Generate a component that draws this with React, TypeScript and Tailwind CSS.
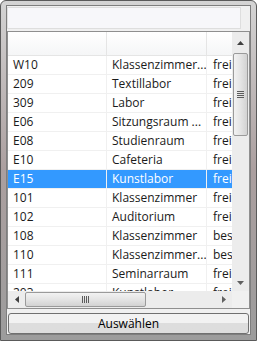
import React from 'react';

type Room = { nr: string; name: string; status: string };

const ROOMS: Room[] = [
  { nr: 'W10', name: 'Klassenzimmer...', status: 'frei' },
  { nr: '209', name: 'Textillabor', status: 'frei' },
  { nr: '309', name: 'Labor', status: 'frei' },
  { nr: 'E06', name: 'Sitzungsraum ...', status: 'frei' },
  { nr: 'E08', name: 'Studienraum', status: 'frei' },
  { nr: 'E10', name: 'Cafeteria', status: 'frei' },
  { nr: 'E15', name: 'Kunstlabor', status: 'frei' },
  { nr: '101', name: 'Klassenzimmer', status: 'frei' },
  { nr: '102', name: 'Auditorium', status: 'frei' },
  { nr: '108', name: 'Klassenzimmer', status: 'bes' },
  { nr: '110', name: 'Klassenzimmer...', status: 'bes' },
  { nr: '111', name: 'Seminarraum', status: 'frei' },
  { nr: '203', name: 'Kunstlabor', status: 'frei' },
];

const SELECTED = 'E15';

function Row({ room }: { room: Room }) {
  const sel = room.nr === SELECTED;
  return (
    <div
      className={`flex h-[19px] shrink-0 border-b border-[#f0f0f0] text-[12px] leading-[18px] ${
        sel ? 'bg-[#3399ff] text-white' : 'bg-white text-[#1a1a1a]'
      }`}
    >
      <div className="w-[99px] shrink-0 truncate border-r border-[#f0f0f0] pl-[5px]">{room.nr}</div>
      <div className="w-[100px] shrink-0 overflow-hidden whitespace-nowrap border-r border-[#f0f0f0] pl-[5px]">
        {room.name}
      </div>
      <div className="w-[40px] shrink-0 whitespace-nowrap pl-[6px]">{room.status}</div>
    </div>
  );
}

export default function App() {
  return (
    <div
      className="h-[341px] w-[257px] rounded-t-[6px] border border-[#5a5a5a] bg-gradient-to-b from-[#d4d4d4] via-[#ab9f9f] to-[#9c9c9c] pb-[5px] pl-[5px] pr-[5px] pt-[4px]"
      style={{ fontFamily: '"Open Sans", "Liberation Sans", sans-serif' }}
    >
      <div className="flex h-full flex-col border border-[#7e7e7e] bg-[#f0f0f0]">
        {/* Filter box */}
        <div className="ml-0 mr-[9px] mt-[1px] h-[22px] border border-[#dedede] bg-[#f7f7fa]" />

        {/* Grid */}
        <div className="mt-[2px] flex h-[278px] flex-col border border-[#8f8f8f] bg-white">
          <div className="flex min-h-0 flex-1">
            <div className="flex min-w-0 flex-1 flex-col overflow-hidden">
              {/* Header */}
              <div className="flex h-[24px] shrink-0 border-b border-[#e5e5e5] bg-gradient-to-b from-white to-[#f5f6f7]">
                <div className="w-[99px] shrink-0 border-r border-[#e5e5e5]" />
                <div className="w-[100px] shrink-0 border-r border-[#e5e5e5]" />
                <div className="flex-1" />
              </div>
              {ROOMS.map((r) => (
                <Row key={r.nr} room={r} />
              ))}
            </div>

            {/* Vertical scrollbar */}
            <div className="flex w-[17px] shrink-0 flex-col items-center bg-[#ececec]">
              <div className="flex h-[21px] w-full items-center justify-center pt-[1px]">
                <svg width="7" height="4" viewBox="0 0 7 4">
                  <path d="M0 4 L3.5 0 L7 4 Z" fill="#404040" />
                </svg>
              </div>
              <div className="flex h-[83px] w-[15px] items-center justify-center rounded-[2px] border border-[#9a9a9a] bg-gradient-to-r from-[#f2f2f2] via-[#e4e4e4] to-[#d2d2d2]">
                <div className="flex flex-col gap-[1px]">
                  <div className="h-px w-[7px] bg-[#5c5c5c]" />
                  <div className="h-px w-[7px] bg-[#5c5c5c]" />
                  <div className="h-px w-[7px] bg-[#5c5c5c]" />
                  <div className="h-px w-[7px] bg-[#5c5c5c]" />
                </div>
              </div>
              <div className="flex-1" />
              <div className="flex h-[17px] w-full items-center justify-center">
                <svg width="7" height="4" viewBox="0 0 7 4">
                  <path d="M0 0 L3.5 4 L7 0 Z" fill="#606060" />
                </svg>
              </div>
            </div>
          </div>

          {/* Horizontal scrollbar */}
          <div className="flex h-[17px] shrink-0">
            <div className="flex flex-1 items-center bg-[#ececec]">
              <div className="flex w-[17px] items-center justify-center">
                <svg width="4" height="7" viewBox="0 0 4 7">
                  <path d="M4 0 L0 3.5 L4 7 Z" fill="#404040" />
                </svg>
              </div>
              <div className="flex h-[15px] w-[121px] items-center justify-center rounded-[2px] border border-[#9a9a9a] bg-gradient-to-b from-[#f2f2f2] via-[#e4e4e4] to-[#d2d2d2]">
                <div className="flex gap-[1px]">
                  <div className="h-[7px] w-px bg-[#5c5c5c]" />
                  <div className="h-[7px] w-px bg-[#5c5c5c]" />
                  <div className="h-[7px] w-px bg-[#5c5c5c]" />
                  <div className="h-[7px] w-px bg-[#5c5c5c]" />
                </div>
              </div>
              <div className="flex-1" />
              <div className="flex w-[17px] items-center justify-center">
                <svg width="4" height="7" viewBox="0 0 4 7">
                  <path d="M0 0 L4 3.5 L0 7 Z" fill="#606060" />
                </svg>
              </div>
            </div>
            <div className="w-[17px] bg-[#f0f0f0]" />
          </div>
        </div>

        {/* Button */}
        <div className="mx-[1px] mt-[4px] flex h-[21px] items-center justify-center rounded-[3px] border border-[#707070] bg-gradient-to-b from-[#f2f2f2] from-50% to-[#dddddd] to-50% text-[12px] text-black">
          Auswählen
        </div>
      </div>
    </div>
  );
}
